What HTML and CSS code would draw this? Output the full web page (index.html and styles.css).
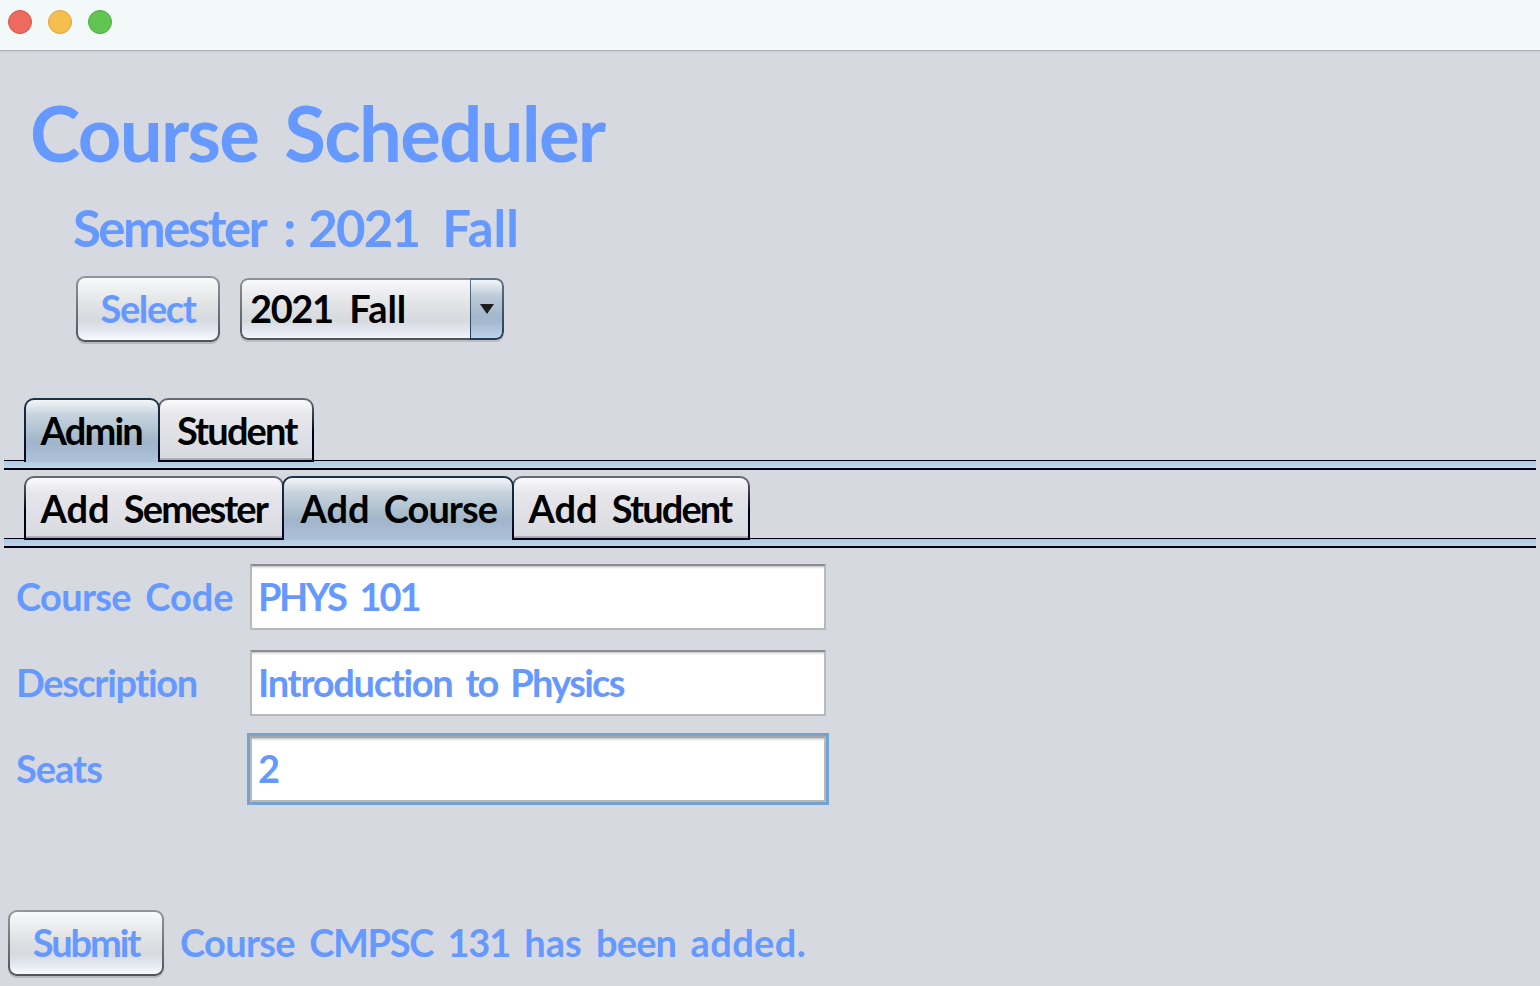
FILE: index.html
```html
<!DOCTYPE html>
<html lang="en">
<head>
<meta charset="utf-8">
<title>Course Scheduler</title>
<link rel="stylesheet" href="styles.css">
</head>
<body>
<div class="titlebar"><i class="dot close"></i><i class="dot minimize"></i><i class="dot expand"></i></div>
<header class="header">
  <h1 class="title">Course Scheduler</h1>
  <h2 class="semester"><span class="t-semester">Semester</span><span class="colon">:</span><span class="t-year">2021</span><span class="fall">Fall</span></h2>
  <div class="picker">
    <button class="button select"><span class="t-select">Select</span></button>
    <div class="combo">
      <div class="combo-value"><span class="t-year">2021</span><span class="fall">Fall</span></div>
      <div class="combo-arrow"><svg width="14" height="10" viewBox="0 0 14 10"><path d="M0 0H14L7 10Z" fill="#1c1c1c"/></svg></div>
    </div>
  </div>
</header>
<nav class="tabs">
  <div class="tab selected admin"><span class="t-admin">Admin</span></div>
  <div class="tab student"><span class="t-student">Student</span></div>
</nav>
<nav class="tabs second">
  <div class="tab add-semester"><span>Add <span class="t-semester">Semester</span></span></div>
  <div class="tab selected add-course"><span>Add <span class="t-course tight">Course</span></span></div>
  <div class="tab add-student"><span>Add <span class="t-student">Student</span></span></div>
</nav>
<main class="form">
  <div class="label code-label"><span class="t-course">Course</span> Code</div>
  <div class="field"><span class="t-phys">PHYS</span> <span class="t-101">101</span></div>
  <div class="label t-description">Description</div>
  <div class="field intro"><span class="t-intro">Introduction</span> <span class="t-to">to</span> <span class="t-physics">Physics</span></div>
  <div class="label t-seats">Seats</div>
  <div class="field focused">2</div>
</main>
<footer class="footer">
  <button class="button submit"><span class="t-submit">Submit</span></button>
  <div class="status"><span class="t-course">Course</span> <span class="t-cmpsc">CMPSC</span> <span class="t-131">131</span> has <span class="t-been">been</span> <span class="t-added">added.</span></div>
</footer>
</body>
</html>
```
FILE: styles.css
```css
* { box-sizing: border-box; }
body {
  margin: 0; width: 1540px; height: 986px; overflow: hidden;
  display: flex; flex-direction: column;
  background: #d6d9df; color: #6699ff;
  font: 700 38px/66px Lato, "Open Sans", sans-serif;
  white-space: nowrap; word-spacing: 5px;
}

.titlebar {
  display: flex; gap: 16px; height: 52px; padding: 10px 8px; flex: none;
  background: #f3f9f9; border-bottom: 1px solid #c9ccd2; box-shadow: inset 0 -1px #aeb1b7;
}
.dot { width: 24px; height: 24px; border-radius: 50%; border: 1px solid; }
.close { background: #ed6a5e; border-color: #d65349; }
.minimize { background: #f5bf4f; border-color: #d9a23c; }
.expand { background: #61c554; border-color: #4caa3e; }

.header { height: 346px; flex: none; padding-top: 36px; }
.title { margin: 0 0 0 30px; font-size: 76px; line-height: 90px; font-weight: 700; letter-spacing: -1.7px; word-spacing: 9.5px; }
.semester { display: flex; margin: 20px 0 0 73px; height: 60px; line-height: 60px; font-size: 51px; font-weight: 700; }
.semester .colon { margin: 0 12px 0 18px; }
.semester .fall { margin-left: 23px; }
.picker { display: flex; align-items: flex-start; gap: 20px; margin: 18px 0 0 76px; }

.button {
  height: 66px; padding: 0 0 2px; font: inherit; color: inherit; border: 2px solid transparent; border-radius: 9px;
  background:
    linear-gradient(#f8f9fa, #e2e4e6 40%, #d6d9de 67%, #e3e7f1 84%, #fafbff) padding-box,
    linear-gradient(#93979c, #50535a) border-box;
  box-shadow: 0 2px 0 #b6b9bf;
  line-height: 60px;
}
.select { width: 144px; }
.submit { width: 156px; }

.combo {
  display: flex; width: 264px; height: 62px; margin-top: 2px; color: #000;
  border-radius: 8px; overflow: hidden; line-height: 56px;
  box-shadow: 0 2px 0 #babdc4;
}
.combo-value {
  display: flex; width: 230px; padding-left: 8px; border: 2px solid transparent; border-right: 0; border-radius: 8px 0 0 8px;
  background:
    linear-gradient(#f8f8fb, #e2e4e6 40%, #d6d9dd 70%, #e3e6f0 86%, #f2f4fc) padding-box,
    linear-gradient(#8e9197, #50535c) border-box;
}
.combo-value .fall { margin-left: 16.5px; }
.combo-arrow {
  width: 34px; display: flex; justify-content: center; align-items: center; border: 2px solid transparent; border-left-width: 1px; border-radius: 0 8px 8px 0;
  background:
    linear-gradient(#f2f5f8, #bccad6 28%, #a3b8cd 62%, #a6bbd0 75%, #bfd4e8) padding-box,
    linear-gradient(#60748a, #243a50) border-box;
}

.tabs {
  display: flex; align-items: flex-start; height: 72px; flex: none; margin: 0 4px; padding-left: 20px; color: #000;
  background:
    linear-gradient(#000014, #000014) 0 62px / 100% 1px no-repeat,
    linear-gradient(#b2cae0, #bdd6e9) 0 63px / 100% 7px no-repeat,
    linear-gradient(#000014, #000014) 0 70px / 100% 2px no-repeat;
}
.second { margin-top: 6px; }
.tab {
  height: 64px; line-height: 64px; border: 2px solid transparent; border-radius: 10px 10px 0 0;
  background:
    linear-gradient(#fafafc, #e6e6eb 25%, #d9dae1 96%, #a3a5ae 98%) padding-box,
    linear-gradient(#686b73, #505260 15%, #000014 55%) border-box;
}
.tab > span { display: block; margin-top: -2px; }
.selected {
  position: relative; border-bottom: 0;
  background:
    linear-gradient(#f3f6f9, #c9d5df 22%, #a5b9ca 62%, #a1b6cd 70%, #aec3da) padding-box,
    linear-gradient(#1c3247, #10203a 50%, #000014) border-box;
}
.admin { width: 136px; padding-left: 14.5px; }
.student { width: 156px; margin-left: -2px; padding-left: 17px; }
.add-semester { width: 260px; padding-left: 14.5px; }
.add-course { width: 232px; margin-left: -2px; padding-left: 16.5px; }
.add-student { width: 238px; margin-left: -2px; padding-left: 14.5px; }

.form { display: grid; grid-template-columns: 234px 576px; grid-auto-rows: 66px; row-gap: 20px; padding: 16px 0 0 16px; }
.label { line-height: 64px; }
.code-label { word-spacing: 5px; }
.field {
  padding-left: 6px; line-height: 60px; background: #fff; border: 2px solid #b9b9b9; border-top-color: #8c8c90;
  box-shadow: inset 0 1px #cfcfcf, inset 0 2px #e8e8e8, inset 0 3px #f8f8f8;
}
.intro { word-spacing: 3.7px; }
.focused { outline: 3px solid #73a4d1; outline-offset: 0; border-top-color: #a5a5a5; }

.footer { display: flex; gap: 16px; margin-top: auto; height: 76px; flex: none; padding-left: 8px; }
.status { line-height: 64px; word-spacing: 5px; }

.t-semester { letter-spacing: -.05em; }
.t-year { letter-spacing: -.036em; }
.t-select { letter-spacing: -1.4px; }
.t-admin { letter-spacing: -1.8px; }
.t-student { letter-spacing: -1.9px; }
.t-course { letter-spacing: -.7px; }
.t-course.tight { letter-spacing: -1px; }
.t-description { letter-spacing: -1.4px; }
.t-seats { letter-spacing: -1px; }
.t-phys { letter-spacing: -2.5px; }
.t-101 { letter-spacing: -2px; }
.t-intro { letter-spacing: -1.3px; }
.t-to { letter-spacing: -2px; }
.t-physics { letter-spacing: -1.7px; }
.t-submit { letter-spacing: -2.1px; }
.t-cmpsc { letter-spacing: -1.3px; }
.t-131 { letter-spacing: -1.2px; }
.t-been { letter-spacing: -.8px; }
.t-added { letter-spacing: .4px; }
```
